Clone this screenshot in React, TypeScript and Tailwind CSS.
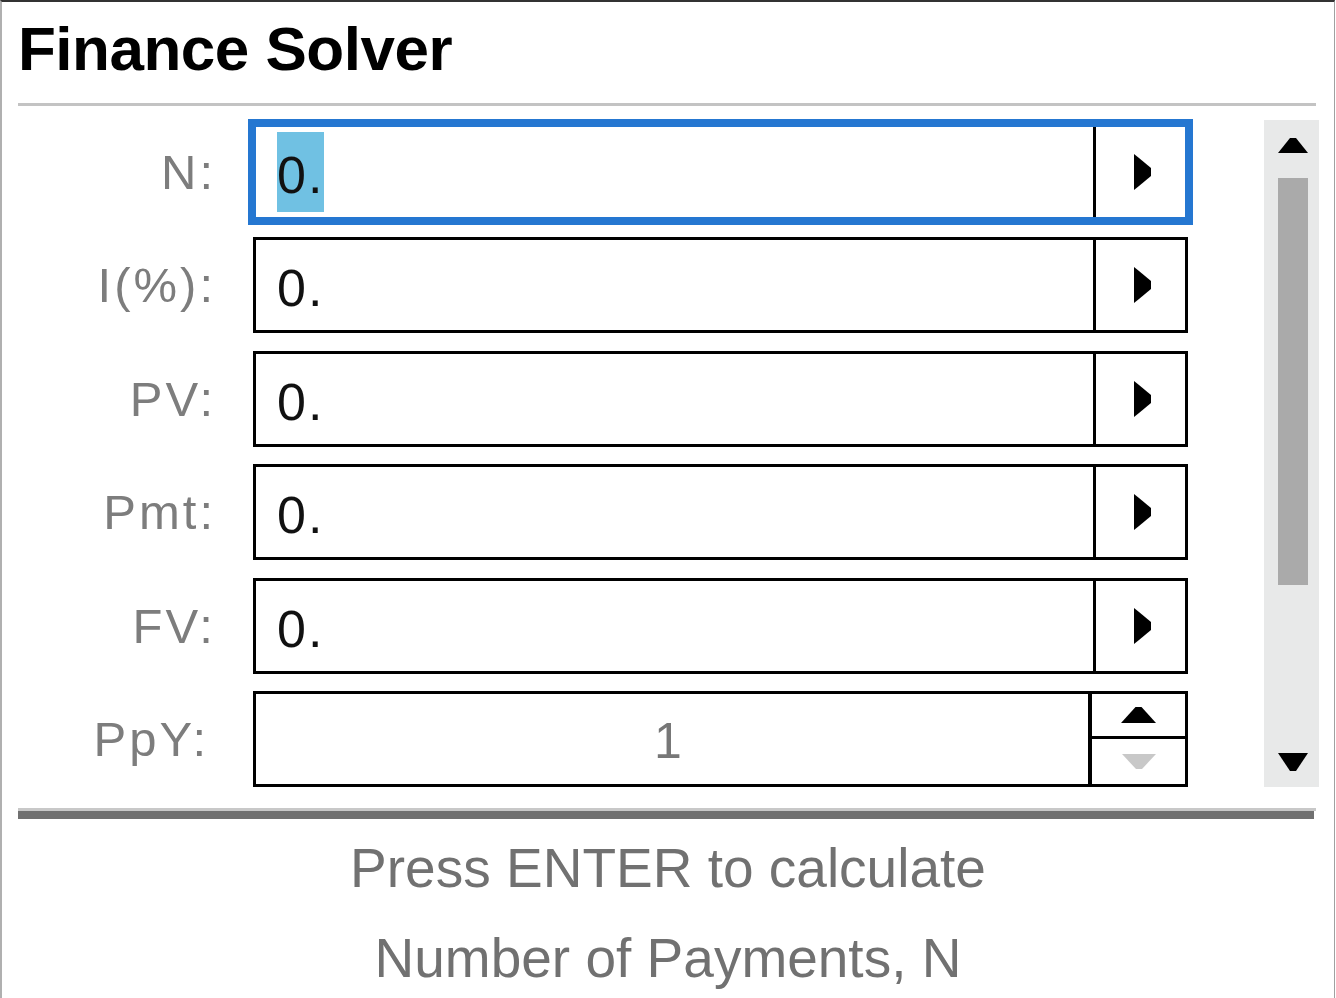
const rows = [
  { label: "N:", value: "0.", focused: true },
  { label: "I(%):", value: "0." },
  { label: "PV:", value: "0." },
  { label: "Pmt:", value: "0." },
  { label: "FV:", value: "0." },
];

const RightArrow = () => (
  <svg width="18" height="36" viewBox="0 0 18 36" className="block">
    <polygon points="0,0 5,4 17,14 17,22 5,32 0,36" fill="#000" />
  </svg>
);

const Tri = ({ up, color, w = 34, h = 16 }: { up?: boolean; color: string; w?: number; h?: number }) => (
  <svg width={w} height={h} viewBox={`0 0 ${w} ${h}`} className="block">
    {up ? (
      <polygon points={`${w / 2 - 3},0 ${w / 2 + 3},0 ${w},${h} 0,${h}`} fill={color} />
    ) : (
      <polygon points={`0,0 ${w},0 ${w / 2 + 3},${h} ${w / 2 - 3},${h}`} fill={color} />
    )}
  </svg>
);

const Field = ({ value, focused }: { value: string; focused?: boolean }) => (
  <div
    className={
      "flex h-[96px] w-[935px] border-[3px] " +
      (focused ? "border-[#2577d1] outline-[5px] outline-solid outline-[#2577d1]" : "border-black")
    }
  >
    <div className="flex-1 pl-[21px] flex items-center">
      <span
        className={
          "inline-block h-[80px] leading-[86px] text-[52px] tracking-[2px] text-[#111]" +
          (focused ? " bg-[#70c1e3]" : "")
        }
      >
        {value}
      </span>
    </div>
    <div className="w-[3px] bg-black" />
    <div className="w-[89px] flex items-center justify-center pl-[4px]">
      <RightArrow />
    </div>
  </div>
);

export default function App() {
  return (
    <div className="w-[1336px] h-[998px] bg-white overflow-hidden font-['Liberation_Sans',Arial,sans-serif]">
      <div className="h-full w-[1335px] border-t-2 border-t-[#333] border-l-2 border-l-[#b0b0b0] border-r border-r-[#a0a0a0]">
        <div className="h-[101px] pl-[16px] pt-[16px]">
          <h1 className="text-[62px] leading-[62px] font-bold tracking-[-0.5px] text-black">Finance Solver</h1>
        </div>
        <div className="ml-[16px] w-[1298px] h-[3px] bg-[#c3c3c3]" />

        <div className="flex pt-[14px]">
          <div className="w-[1262px] pt-[4px] flex flex-col gap-[17.4px]">
            {rows.map((r) => (
              <div key={r.label} className="flex h-[96px] items-center">
                <div className="w-[214px] text-right text-[49px] leading-[96px] tracking-[3px] text-[#7d7d7d]">
                  {r.label}
                </div>
                <div className="ml-[37px]">
                  <Field value={r.value} focused={r.focused} />
                </div>
              </div>
            ))}
            <div className="flex h-[96px] items-center">
              <div className="w-[214px] pr-[7px] text-right text-[49px] leading-[96px] tracking-[3px] text-[#7d7d7d]">
                PpY:
              </div>
              <div className="ml-[37px] flex h-[96px] w-[935px] border-[3px] border-black">
                <div className="flex-1 flex items-center justify-center text-[50px] leading-[96px] text-[#777] pt-[4px] pr-[8px]">
                  1
                </div>
                <div className="w-[4px] bg-black" />
                <div className="w-[93px] flex flex-col">
                  <div className="h-[42px] flex items-center justify-center">
                    <Tri up color="#000" w={35} h={16} />
                  </div>
                  <div className="h-[3px] bg-black" />
                  <div className="flex-1 flex items-center justify-center">
                    <Tri color="#c8c8c8" w={34} h={15} />
                  </div>
                </div>
              </div>
            </div>
          </div>

          <div className="w-[55px] h-[667px] bg-[#e8e9e9] flex flex-col items-center">
            <div className="pt-[18px] pl-[2px]">
              <Tri up color="#000" w={30} h={15} />
            </div>
            <div className="mt-[25px] ml-[2px] w-[30px] h-[407px] bg-[#aaaaaa]" />
            <div className="flex-1" />
            <div className="pb-[16px] pl-[2px]">
              <Tri color="#000" w={30} h={18} />
            </div>
          </div>
        </div>

        <div className="mt-[21px] ml-[16px] w-[1298px]">
          <div className="h-[3px] bg-[#c8c8c8]" />
          <div className="h-[8px] w-[1296px] bg-[#707070]" />
        </div>

        <div className="mt-[4px] text-center text-[55px] leading-[90px] text-[#717171]">
          <p>Press ENTER to calculate</p>
          <p>Number of Payments, N</p>
        </div>
      </div>
    </div>
  );
}
